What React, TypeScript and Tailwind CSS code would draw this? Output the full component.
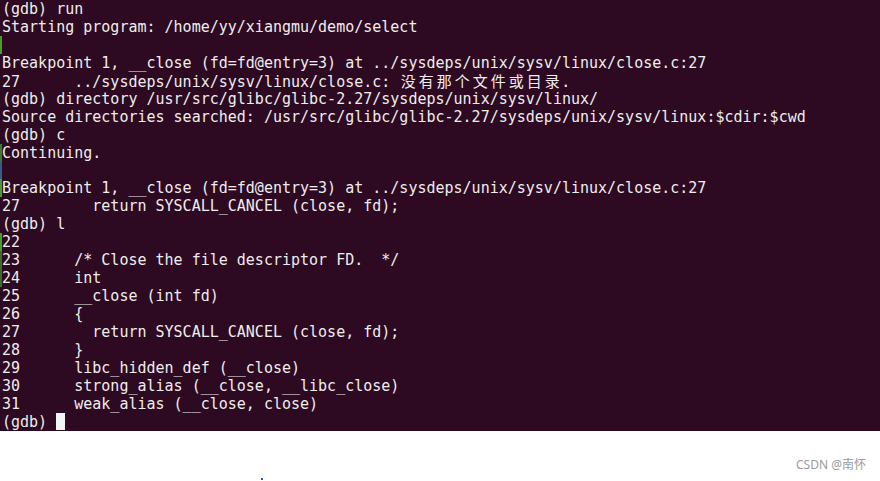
import React from "react";

const bp = "Breakpoint 1, __close (fd=fd@entry=3) at ../sysdeps/unix/sysv/linux/close.c:27";
const n = (num: string, rest: string) => num.padEnd(8, " ") + rest;

const lines: string[] = [
  "(gdb) run",
  "Starting program: /home/yy/xiangmu/demo/select",
  "",
  bp,
  "__CJK__",
  "(gdb) directory /usr/src/glibc/glibc-2.27/sysdeps/unix/sysv/linux/",
  "Source directories searched: /usr/src/glibc/glibc-2.27/sysdeps/unix/sysv/linux:$cdir:$cwd",
  "(gdb) c",
  "Continuing.",
  "",
  bp,
  n("27", "  return SYSCALL_CANCEL (close, fd);"),
  "(gdb) l",
  "22",
  n("23", "/* Close the file descriptor FD.  */"),
  n("24", "int"),
  n("25", "__close (int fd)"),
  n("26", "{"),
  n("27", "  return SYSCALL_CANCEL (close, fd);"),
  n("28", "}"),
  n("29", "libc_hidden_def (__close)"),
  n("30", "strong_alias (__close, __libc_close)"),
  n("31", "weak_alias (__close, close)"),
];

const marks: Record<number, string> = {
  2: "border-[#4c9a2a]",
  8: "border-[#3f7a2a]",
  9: "border-[#3a5a8a]",
  10: "border-[#4c9a2a]",
  13: "border-[#4c9a2a]",
  14: "border-[#3f6a2a]",
  15: "border-[#3f6a2a]",
};

const cjk = "没有那个文件或目录".split("");

export default function App() {
  return (
    <div className="w-[880px] h-[481px] bg-white flex flex-col">
      <div
        className="h-[431px] bg-[#2d0922] text-[#eeeeec] text-[15px] leading-[18px] whitespace-pre flex flex-col"
        style={{ fontFamily: '"DejaVu Sans Mono", "Liberation Mono", "Noto Sans CJK SC", monospace' }}
      >
        {lines.map((l, i) => (
          <div
            key={i}
            className={`h-[18px] border-l-2 pl-[0px] ${marks[i] ?? "border-transparent"}`}
          >
            {l === "__CJK__" ? (
              <>
                {n("27", "../sysdeps/unix/sysv/linux/close.c: ")}
                {cjk.map((c, j) => (
                  <span
                    key={j}
                    className="inline-block w-[18px] text-center"
                    style={{ fontFamily: '"Noto Sans CJK SC", sans-serif' }}
                  >
                    {c}
                  </span>
                ))}
                .
              </>
            ) : (
              l
            )}
          </div>
        ))}
        <div className="h-[18px] flex items-start border-l-2 border-transparent">
          <span>(gdb) </span>
          <span className="inline-block w-[9px] h-[17px] bg-[#f4f4f4]" />
        </div>
      </div>
      <div className="flex justify-end pr-[14px] pt-[27px]">
        <span
          className="text-[12px] leading-[14px] text-[#9a9a9a]"
          style={{ fontFamily: '"Noto Sans", "Noto Sans CJK SC", sans-serif' }}
        >
          CSDN @南怀
        </span>
      </div>
      <div className="flex pl-[261px] pt-[6px]">
        <div className="w-[2px] h-[2px] bg-[#2b4bd8]" />
      </div>
    </div>
  );
}
